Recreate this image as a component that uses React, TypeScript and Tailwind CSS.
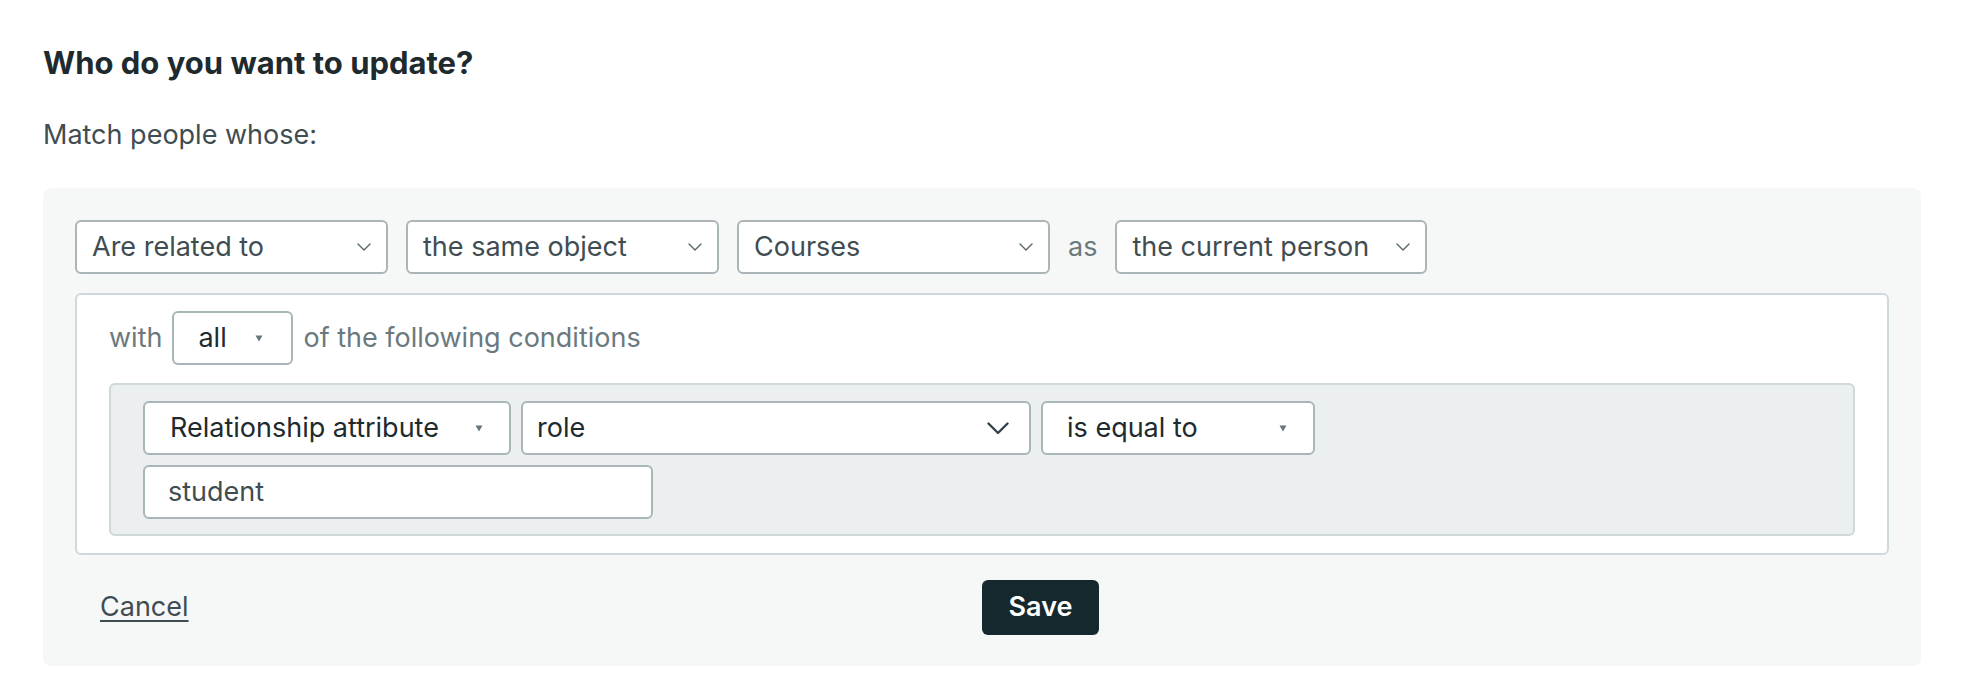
import React from 'react';

const font = { fontFamily: 'Inter, "Noto Sans", sans-serif' };

function ThinChevron() {
    return (
        <svg width="14" height="8" viewBox="0 0 14 8" fill="none" className="shrink-0">
            <path d="M1 1l6 6 6-6" stroke="#55666b" strokeWidth="1.4" strokeLinecap="round" strokeLinejoin="round" />
        </svg>
    );
}

function BoldChevron() {
    return (
        <svg width="22" height="13" viewBox="0 0 22 13" fill="none" className="shrink-0">
            <path d="M1.5 1.5l9.5 9.5 9.5-9.5" stroke="#33434a" strokeWidth="2.4" strokeLinecap="round" strokeLinejoin="round" />
        </svg>
    );
}

function Caret() {
    return (
        <svg width="8" height="8" viewBox="0 0 8 8" className="shrink-0">
            <path d="M0.5 1.5h7L4 7.5z" fill="#66767b" />
        </svg>
    );
}

// top row dropdown
function TopSelect({ label, width = 'w-[313px]' }: { label: string; width?: string }) {
    return (
        <div className={`flex h-[54px] ${width} items-center justify-between rounded-md border-2 border-[#aab5b8] bg-white pl-[15px] pr-[15px] text-[27px] text-[#3f4d52]`}>
            <span>{label}</span>
            <ThinChevron />
        </div>
    );
}

export default function App() {
    return (
        <div className="h-[684px] w-full bg-white pl-[43px] pt-[43px]" style={font}>
            <h2 className="text-[31px] font-bold leading-[40px] text-[#1e2a2e]">Who do you want to update?</h2>
            <p className="mt-[33px] text-[27px] leading-[38px] text-[#3f4d52]">Match people whose:</p>

            <div className="mt-[34px] w-[1878px] rounded-lg bg-[#f6f8f8] px-[32px] pb-[31px] pt-[32px]">
                {/* relation row */}
                <div className="flex items-center gap-[18px]">
                    <TopSelect label="Are related to" />
                    <TopSelect label="the same object" />
                    <TopSelect label="Courses" />
                    <span className="text-[27px] text-[#6b797e]">as</span>
                    <TopSelect label="the current person" width="w-[312px]" />
                </div>

                {/* conditions */}
                <div className="mt-[19px] rounded-md border-2 border-[#cfd8da] bg-white pb-[17px] pl-[32px] pr-[32px] pt-[16px]">
                    <div className="flex items-center gap-[10px] text-[27px] text-[#6b797e]">
                        <span>with</span>
                        <div className="flex h-[54px] w-[121px] items-center justify-between rounded-md border-2 border-[#aab5b8] bg-white pl-[24px] pr-[28px] text-[#1e2a2e]">
                            <span>all</span>
                            <Caret />
                        </div>
                        <span>of the following conditions</span>
                    </div>

                    <div className="mt-[18px] rounded-md border-2 border-[#cfd8da] bg-[#ebeff0] pb-[15px] pl-[32px] pr-[32px] pt-[16px] text-[27px] text-[#1e2a2e]">
                        <div className="flex items-center gap-[10px]">
                            <div className="flex h-[54px] w-[368px] items-center justify-between rounded-md border-2 border-[#aab5b8] bg-white pl-[25px] pr-[26px]">
                                <span>Relationship attribute</span>
                                <Caret />
                            </div>
                            <div className="flex h-[54px] w-[510px] items-center justify-between rounded-md border-2 border-[#aab5b8] bg-white pl-[14px] pr-[20px]">
                                <span>role</span>
                                <BoldChevron />
                            </div>
                            <div className="flex h-[54px] w-[274px] items-center justify-between rounded-md border-2 border-[#aab5b8] bg-white pl-[24px] pr-[26px]">
                                <span>is equal to</span>
                                <Caret />
                            </div>
                        </div>
                        <div className="mt-[10px] flex h-[54px] w-[510px] items-center rounded-md border-2 border-[#aab5b8] bg-white pl-[23px] text-[#3f4d52]">
                            student
                        </div>
                    </div>
                </div>

                {/* actions */}
                <div className="mt-[25px] grid grid-cols-2 items-center">
                    <div className="pl-[25px]">
                        <a className="cursor-pointer text-[27px] text-[#3f4d52] underline underline-offset-4">Cancel</a>
                    </div>
                    <div>
                        <button className="h-[55px] w-[117px] rounded-md bg-[#15282d] text-[27px] font-semibold text-white">Save</button>
                    </div>
                </div>
            </div>
        </div>
    );
}
